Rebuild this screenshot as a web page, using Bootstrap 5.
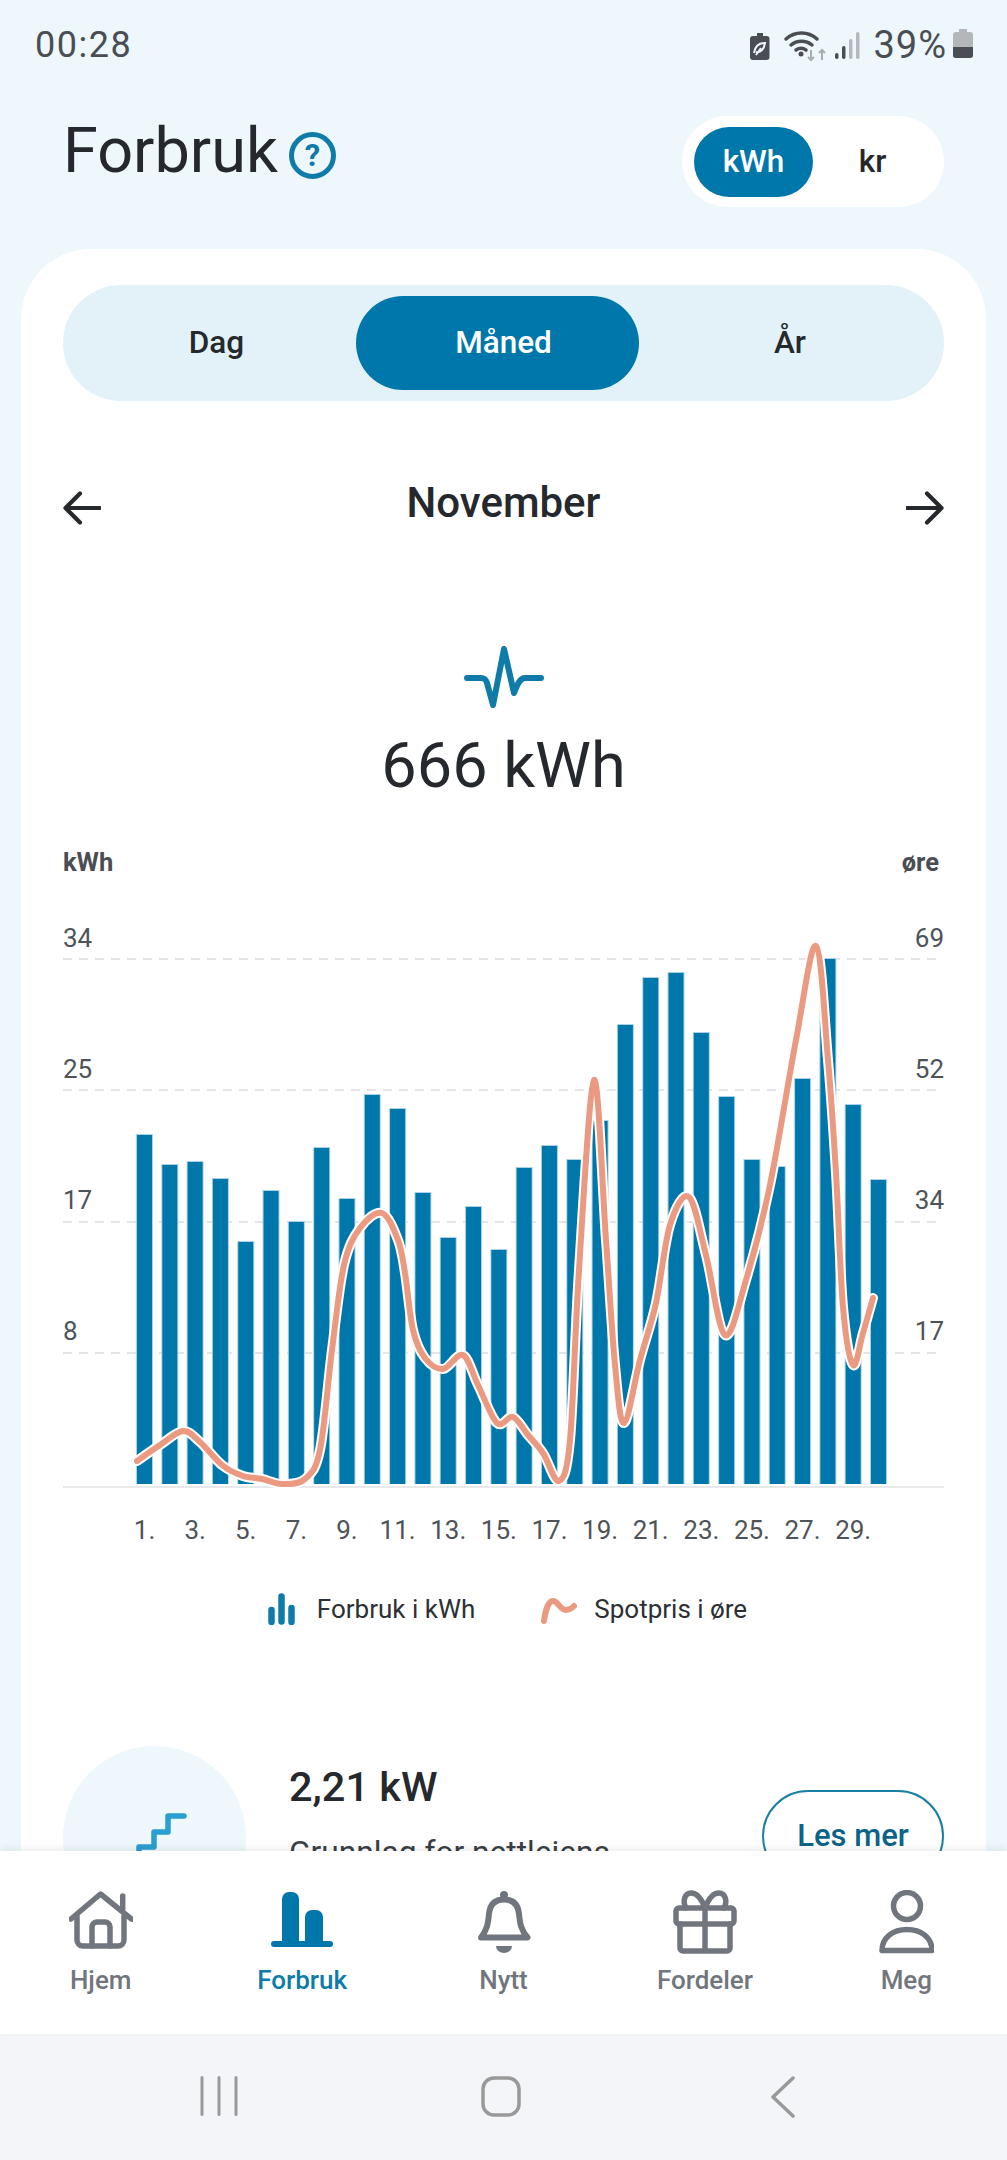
<!DOCTYPE html>
<html lang="nb">
<head>
  <meta charset="UTF-8" />
  <meta name="viewport" content="width=device-width, initial-scale=1.0" />
  <title>Forbruk</title>
  <link href="https://cdn.jsdelivr.net/npm/bootstrap@5.3.2/dist/css/bootstrap.min.css" rel="stylesheet">
  <style>
    body {
      margin: 0;
      width: 1007px;
      height: 2160px;
      overflow: hidden;
      background: #eef7fb;
      font-family: Roboto, "Liberation Sans", sans-serif;
      color: #25282d;
    }
    .screen-main { height: 1851px; overflow: hidden; }

    /* Status bar */
    .status-bar { height: 64px; padding: 24px 34px 0 35px; color: #4a4e54; font-size: 36px; line-height: 42px; }
    .status-time { letter-spacing: 1.5px; }
    .status-pct { font-size: 38px; letter-spacing: 1px; margin-left: 13px; margin-right: 6px; }
    .status-icons { margin-left: -3px; }

    /* Header */
    .page-head { padding: 52px 63px 0 63px; height: 185px; }
    .page-title { font-size: 63px; line-height: 70px; font-weight: 400; margin: 0 11px 0 0; color: #25282d; }
    .unit-toggle { background: #fff; padding: 10px 12px; height: 91px; width: 262px; }
    .unit-btn { width: 120px; height: 70px; font-size: 31.500px; font-weight: 500; border: 0; padding: 0; background: transparent; color: #25282d; }
    .unit-btn.is-on { background: #0077aa; color: #fff; }

    /* Card */
    .main-card { margin: 0 21px; background: #fff; border-radius: 70px 70px 0 0; padding: 36px 42px 0; height: 1700px; }
    .period-tabs { background: #e3f1f8; padding: 11px; height: 116px; }
    .period-btn { height: 94px; border: 0; padding: 0; font-size: 31.500px; font-weight: 500; background: transparent; color: #25282d; }
    .period-day { flex: none; width: 282px; padding-left: 3px; }
    .period-month { flex: none; width: 283px; padding-left: 12px; }
    .period-year { flex: 1 1 0; padding-left: 8px; }
    .period-btn.is-on { background: #0077aa; color: #fff; }
    .month-row { margin-top: 71px; height: 72px; }
    .month-name { font-size: 42px; font-weight: 500; margin: 0 0 10px; color: #25282d; }
    .pulse-icon { display: block; margin: 102px auto 0; }
    .total-value { font-size: 63px; line-height: 62px; margin-top: 27px; text-align: center; color: #25282d; }
    .axis-titles { margin-top: 53px; font-size: 25.500px; line-height: 24px; font-weight: 700; color: #4a4e54; padding-right: 5px; }
    .chart-svg { display: block; margin-top: 26px; }
    .chart-svg text { font-family: Roboto, "Liberation Sans", sans-serif; font-size: 26px; fill: #4e5359; }
    .chart-legend { margin-top: 33px; height: 32px; font-size: 26px; line-height: 32px; color: #2c3035; padding-left: 8px; }
    .legend-entry { gap: 22px; }
    .legend-spot { margin-left: 66px; gap: 17px; }

    /* Effekt row */
    .effect-row { margin-top: 121px; }
    .effect-circle { width: 183px; height: 183px; background: #eef7fb; flex: none; }
    .effect-text { margin-left: 43px; padding-top: 16px; }
    .effect-value { font-size: 41.500px; line-height: 49px; font-weight: 500; color: #25282d; }
    .effect-desc { font-size: 31.700px; line-height: 38px; margin-top: 23px; color: #3a3f45; white-space: nowrap; }
    .more-btn { margin-top: 44px; margin-left: auto; width: 182px; height: 92px; border: 2px solid #1a7fa5; color: #0b6488; font-size: 31px; font-weight: 500; padding: 0; background: #fff; }

    /* Bottom navigation */
    .bottom-nav { height: 183px; background: #fff; position: relative; box-shadow: 0 -3px 8px rgba(0, 0, 0, .07); }
    .nav-entry { flex: 1 1 0; color: #71767e; font-size: 26px; line-height: 30px; font-weight: 500; text-decoration: none; }
    .nav-entry.is-on { color: #0e7ba8; }
    .nav-glyph { height: 64px; margin-top: 39px; margin-bottom: 11px; }

    /* Android buttons */
    .system-bar { height: 126px; background: #f4f5f8; padding: 42px 83px 0 78px; }
    .system-entry { flex: 1 1 0; }
  </style>
</head>
<body>

<div class="screen-main">
  <div class="status-bar d-flex justify-content-between">
    <span class="status-time">00:28</span>
    <div class="status-icons d-flex align-items-start">
      <svg width="111" height="36" viewBox="745 28 111 36" class="mt-1">
        <path d="M749 36h4v-3h6v3h3.500a3 3 0 0 1 3 3v18a3 3 0 0 1-3 3h-13.500a3 3 0 0 1-3-3v-18a3 3 0 0 1 3-3z" fill="#4a4e54"/>
        <path d="M750 53c1-7 5-10 11-10-1 6-4 10-9 9m0 3l5-7" fill="none" stroke="#eef7fb" stroke-width="2"/>
        <g fill="none" stroke="#4a4e54" stroke-width="3.500" stroke-linecap="round">
          <path d="M782 39c9-8 22-8 31 0"/>
          <path d="M787 45c6-5 15-5 21 0"/>
          <path d="M792 50c3-2 7-2 10 0"/>
        </g>
        <circle cx="797" cy="54" r="2.500" fill="#4a4e54"/>
        <path d="M807 50v10m-3-3l3 3 3-3M818 60v-10m-3 3l3-3 3 3" fill="none" stroke="#a9adb1" stroke-width="2"/>
        <g fill="#4a4e54"><rect x="831" y="53" width="3.500" height="6" rx="1.700"/><rect x="838" y="46" width="3.500" height="13" rx="1.700"/></g>
        <g fill="#b5b9bc"><rect x="845" y="39" width="3.500" height="20" rx="1.700"/><rect x="852" y="32" width="3.500" height="27" rx="1.700"/></g>
      </svg>
      <span class="status-pct">39%</span>
      <svg width="20" height="30" viewBox="0 0 20 30" class="mt-1">
        <path d="M6 1h8v3h3a3 3 0 0 1 3 3v20a3 3 0 0 1-3 3h-14a3 3 0 0 1-3-3v-20a3 3 0 0 1 3-3h3z" fill="#b4b7ba"/>
        <path d="M0 19h20v8a3 3 0 0 1-3 3h-14a3 3 0 0 1-3-3z" fill="#4a4e54"/>
      </svg>
    </div>
  </div>

  <div class="page-head d-flex justify-content-between align-items-start">
    <div class="d-flex align-items-start">
      <h1 class="page-title">Forbruk</h1>
      <svg width="47" height="47" viewBox="0 0 47 47" class="mt-3">
        <circle cx="23.500" cy="23.500" r="21" fill="none" stroke="#0e7ba8" stroke-width="5"/>
        <text x="23.500" y="34" text-anchor="middle" font-size="31" font-weight="700" font-family="Roboto, sans-serif" fill="#0e7ba8">?</text>
      </svg>
    </div>
    <div class="unit-toggle d-flex align-items-center rounded-pill">
      <button class="btn unit-btn is-on rounded-pill" type="button">kWh</button>
      <button class="btn unit-btn rounded-pill" type="button">kr</button>
    </div>
  </div>

  <div class="main-card">
    <div class="period-tabs d-flex rounded-pill">
      <button class="btn period-btn period-day rounded-pill" type="button">Dag</button>
      <button class="btn period-btn period-month is-on rounded-pill" type="button">Måned</button>
      <button class="btn period-btn period-year rounded-pill" type="button">År</button>
    </div>

    <div class="month-row d-flex justify-content-between align-items-center">
      <svg width="38" height="36" viewBox="0 0 38 36"><path d="M36.500 18H3M17 3.500L2.500 18 17 32.500" fill="none" stroke="#25282d" stroke-width="4.200" stroke-linecap="round" stroke-linejoin="round"/></svg>
      <h2 class="month-name">November</h2>
      <svg width="38" height="36" viewBox="0 0 38 36"><path d="M1.500 18H35M21 3.500L35.500 18 21 32.500" fill="none" stroke="#25282d" stroke-width="4.200" stroke-linecap="round" stroke-linejoin="round"/></svg>
    </div>

    <svg class="pulse-icon" width="80" height="62" viewBox="464 646 80 62">
      <path d="M467 678h14c4 0 5 2 6 5l6 22 11-56 10 44c2-5 5-15 11-15h16" fill="none" stroke="#0e7ba8" stroke-width="6" stroke-linecap="round" stroke-linejoin="round"/>
    </svg>
    <div class="total-value">666 kWh</div>

    <div class="axis-titles d-flex justify-content-between"><span>kWh</span><span>øre</span></div>

    <svg class="chart-svg" id="chart" width="881" height="660" viewBox="63 900 881 660"></svg>

    <div class="chart-legend d-flex justify-content-center">
      <div class="legend-entry d-flex">
        <svg width="27" height="32" viewBox="0 0 27 32"><g fill="none" stroke="#0e7ba8" stroke-width="6.500" stroke-linecap="round"><path d="M3.500 17v12M13.500 3.500v25M23.500 15v14"/></g></svg>
        <span>Forbruk i kWh</span>
      </div>
      <div class="legend-entry legend-spot d-flex">
        <svg width="36" height="32" viewBox="0 0 36 32"><path d="M3 28c1-8 4-20 9-20 5 0 7 9 13 9 4 0 6-2 8-4" fill="none" stroke="#ea9a80" stroke-width="6" stroke-linecap="round"/></svg>
        <span>Spotpris i øre</span>
      </div>
    </div>

    <div class="effect-row d-flex align-items-start">
      <div class="effect-circle rounded-circle d-flex">
        <svg width="183" height="183" viewBox="64 1746 183 183">
          <path d="M118 1860h22v-13h15v-15h14v-16h16" fill="none" stroke="#2a9fd0" stroke-width="5.500" stroke-linecap="round" stroke-linejoin="round"/>
        </svg>
      </div>
      <div class="effect-text">
        <div class="effect-value">2,21 kW</div>
        <div class="effect-desc">Grunnlag for nettleiens</div>
      </div>
      <button class="btn more-btn rounded-pill" type="button">Les mer</button>
    </div>
  </div>
</div>

<nav class="bottom-nav d-flex">
  <a class="nav-entry text-center" href="#">
    <div class="nav-glyph">
      <svg width="64" height="64" viewBox="0 -2 64 64"><g fill="none" stroke="#71767e" stroke-width="5.500" stroke-linecap="round" stroke-linejoin="round">
        <path d="M2 27L31.500 2 62.500 27M53.700 4v16M8 24v24a6 6 0 0 0 6 6h35a6 6 0 0 0 6-6V24"/>
        <path d="M23 54V35a5 5 0 0 1 5-5h8a5 5 0 0 1 5 5v19"/>
      </g></svg>
    </div>
    Hjem
  </a>
  <a class="nav-entry is-on text-center" href="#">
    <div class="nav-glyph">
      <svg width="64" height="64" viewBox="-1 -2 64 64"><g fill="#0077aa">
        <path d="M11 52V7a7 7 0 0 1 7-7h3a7 7 0 0 1 7 7v45z"/>
        <path d="M34 52V25a7 7 0 0 1 7-7h4a7 7 0 0 1 7 7v27z"/>
        <rect x="0" y="49" width="62" height="6" rx="3"/>
      </g></svg>
    </div>
    Forbruk
  </a>
  <a class="nav-entry text-center" href="#">
    <div class="nav-glyph">
      <svg width="58" height="64" viewBox="0 0 58 64">
        <circle cx="29" cy="5" r="4" fill="#71767e"/>
        <path d="M6 47.500C12 40 13 34 14 24 15 13 21 9.500 29 9.500S43 13 44 24C45 34 46 40 52.500 47.500Z" fill="none" stroke="#71767e" stroke-width="6" stroke-linejoin="round"/>
        <path d="M21 56h16a8 7 0 0 1-16 0z" fill="#71767e"/>
      </svg>
    </div>
    Nytt
  </a>
  <a class="nav-entry text-center" href="#">
    <div class="nav-glyph">
      <svg width="64" height="64" viewBox="0 0 64 64"><g fill="none" stroke="#71767e" stroke-width="5.500" stroke-linecap="round" stroke-linejoin="round">
        <rect x="3" y="18" width="58" height="16" rx="3"/>
        <path d="M7 34v24a3 3 0 0 0 3 3h44a3 3 0 0 0 3-3V34M32 18v43"/>
        <path d="M32 18c-3-8-8-15-14-15-6 0-9 8-5 15M32 18c3-8 8-15 14-15 6 0 9 8 5 15"/>
      </g></svg>
    </div>
    Fordeler
  </a>
  <a class="nav-entry text-center" href="#">
    <div class="nav-glyph">
      <svg width="56" height="64" viewBox="-1 0 56 64"><g fill="none" stroke="#71767e" stroke-width="5.500" stroke-linejoin="round">
        <circle cx="28" cy="16" r="13.500"/>
        <path d="M3 60.500c0-13 11-21 25-21s25 8 25 21z"/>
      </g></svg>
    </div>
    Meg
  </a>
</nav>

<div class="system-bar d-flex align-items-start">
  <div class="system-entry text-center">
    <svg width="38" height="40" viewBox="0 0 38 40"><path d="M2 1.500v37M19 1.500v37M36 1.500v37" stroke="#999" stroke-width="3" stroke-linecap="round"/></svg>
  </div>
  <div class="system-entry text-center">
    <svg width="40" height="41" viewBox="0 0 40 41"><rect x="2" y="2" width="36" height="37" rx="11" fill="none" stroke="#999" stroke-width="3.500"/></svg>
  </div>
  <div class="system-entry text-center">
    <svg width="24" height="42" viewBox="0 0 24 42"><path d="M22 2L2 21l20 19" fill="none" stroke="#999" stroke-width="3.500" stroke-linecap="round" stroke-linejoin="round"/></svg>
  </div>
</div>

<script>
  // everything in the chart uses page coordinates, the viewBox takes care of the offset
  const chart = document.getElementById('chart');
  const NS = 'http://www.w3.org/2000/svg';

  const tops = [1135,1165,1162,1179,1242,1191,1222,1148,1199,1095,1109,1193,1238,1207,1250,
                1168,1146,1160,1121,1025,978,973,1033,1097,1160,1167,1079,959,1105,1180];
  const spot = [[137,1461],[160,1445],[183,1431],[200,1442],[222,1465],[243,1476],[262,1479],[282,1484],[305,1479],
                [320,1450],[332,1350],[344,1265],[360,1228],[382,1213],[398,1240],[405,1273],[413,1330],[425,1358],
                [443,1369],[463,1355],[478,1385],[497,1423],[513,1417],[528,1435],[543,1453],[559,1481],[570,1440],
                [579,1270],[594,1080],[606,1240],[615,1365],[624,1423],[640,1360],[656,1303],
                [670,1225],[689,1197],[706,1255],[725,1335],[746,1280],[770,1185],[796,1040],[816,946],
                [828,1060],[836,1173],[843,1307],[853,1365],[863,1333],[873,1298]];

  function add(tag, attrs, text) {
    const el = document.createElementNS(NS, tag);
    Object.keys(attrs).forEach(k => el.setAttribute(k, attrs[k]));
    if (text) el.textContent = text;
    chart.appendChild(el);
    return el;
  }

  // grid lines and y labels
  [[959,947,'34','69'],[1090,1078,'25','52'],[1222,1209,'17','34'],[1353,1340,'8','17']].forEach(r => {
    add('line', {x1:63, x2:943, y1:r[0], y2:r[0], stroke:'#e4e5e6', 'stroke-width':2, 'stroke-dasharray':'9 7'});
    add('text', {x:63, y:r[1]}, r[2]);
    add('text', {x:944, y:r[1], 'text-anchor':'end'}, r[3]);
  });
  add('line', {x1:63, x2:944, y1:1487, y2:1487, stroke:'#e8e9ea', 'stroke-width':2});

  // bars
  const pitch = 25.31;
  tops.forEach((top, i) => {
    const x = 137 + i * pitch;
    add('rect', {x:x - 1, y:top - 1, width:17, height:1485 - top, fill:'#a9d3e5'});
    add('rect', {x:x, y:top, width:15, height:1484 - top, fill:'#0077aa'});
    if (i % 2 === 0) add('text', {x:x + 7.5, y:1539, 'text-anchor':'middle'}, (i + 1) + '.');
  });

  // catmull-rom through the price points
  let d = 'M' + spot[0].join(' ');
  for (let i = 0; i < spot.length - 1; i++) {
    const p0 = spot[Math.max(i - 1, 0)], p1 = spot[i], p2 = spot[i + 1], p3 = spot[Math.min(i + 2, spot.length - 1)];
    const c1 = [p1[0] + (p2[0] - p0[0]) / 6, p1[1] + (p2[1] - p0[1]) / 6];
    const c2 = [p2[0] - (p3[0] - p1[0]) / 6, p2[1] - (p3[1] - p1[1]) / 6];
    d += 'C' + c1.join(' ') + ' ' + c2.join(' ') + ' ' + p2.join(' ');
  }
  add('path', {d:d, fill:'none', stroke:'#fff', 'stroke-width':10, 'stroke-linecap':'round'});
  add('path', {d:d, fill:'none', stroke:'#ea9a80', 'stroke-width':6, 'stroke-linecap':'round'});
</script>

<script src="https://cdn.jsdelivr.net/npm/bootstrap@5.3.2/dist/js/bootstrap.bundle.min.js"></script>
</body>
</html>
